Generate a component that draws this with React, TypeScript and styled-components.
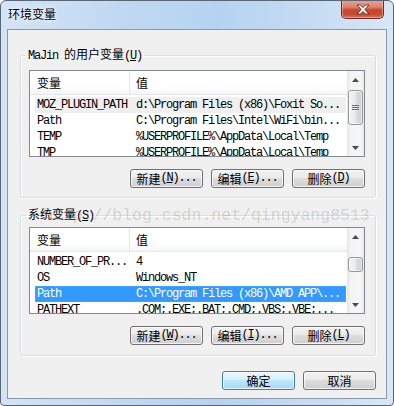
import React from "react";
import styled, { createGlobalStyle } from "styled-components";

const GlobalStyle = createGlobalStyle`
  html, body {
    margin: 0;
    padding: 0;
    background: #ffffff;
  }
  body {
    font-family: "Noto Sans CJK SC", "Liberation Sans", sans-serif;
    font-size: 12px;
    color: #000;
  }
  * {
    box-sizing: border-box;
  }
`;

const Window = styled.div`
  position: relative;
  width: 394px;
  height: 406px;
  display: flex;
  flex-direction: column;
  border: 1px solid #5b6573;
  border-radius: 6px 6px 4px 4px;
  background: linear-gradient(
    to right,
    #d3e4f5 0%,
    #c0d9f2 30%,
    #b5d3f1 55%,
    #c6dcf3 80%,
    #d8e7f7 100%
  );
  overflow: hidden;
`;

const TitleBar = styled.div`
  height: 28px;
  display: flex;
  justify-content: space-between;
  align-items: flex-start;
  padding-left: 7px;
`;

const Title = styled.div`
  margin-top: 5px;
  font-size: 12px;
  line-height: 16px;
  text-shadow: 0 0 6px rgba(255, 255, 255, 0.95), 0 0 2px #fff;
`;

const CloseButton = styled.div`
  width: 43px;
  height: 19px;
  margin-top: -1px;
  margin-right: 9px;
  border: 1px solid #6e2b22;
  border-top: none;
  border-radius: 0 0 5px 5px;
  background: linear-gradient(
    #e9a595 0%,
    #dc806d 40%,
    #c9462f 55%,
    #c24a33 80%,
    #d8775c 100%
  );
  box-shadow: inset 0 0 0 1px rgba(255, 210, 200, 0.45);
  display: flex;
  align-items: center;
  justify-content: center;
`;

const Client = styled.div`
  flex: 1;
  margin: 0 6px 6px;
  border: 1px solid #8e99a5;
  background: #f0f0f0;
  padding: 0 10px 0 12px;
  display: flex;
  flex-direction: column;
`;

const Group = styled.fieldset<{ $top: number; $pt: number; $pb: number }>`
  margin: ${(p) => p.$top}px 0 0;
  padding: ${(p) => p.$pt}px 10px ${(p) => p.$pb}px 8px;
  border: 1px solid #d5dfe5;
  border-radius: 3px;
  box-shadow: inset 1px 1px 0 #ffffff, 1px 1px 0 #ffffff;
  min-width: 0;
`;

const Legend = styled.legend`
  margin-left: -3px;
  padding: 0 2px;
  font-size: 12px;
  line-height: 14px;
`;

const Mono = styled.span`
  font-family: "Liberation Mono", "DejaVu Sans Mono", monospace;
  font-size: 12px;
  letter-spacing: -1.2px;
`;

const List = styled.div`
  height: 87px;
  border: 1px solid #828790;
  background: #ffffff;
  display: flex;
  overflow: hidden;
`;

const ListBody = styled.div`
  flex: 1;
  min-width: 0;
  display: flex;
  flex-direction: column;
`;

const Header = styled.div`
  height: 24px;
  flex-shrink: 0;
  display: grid;
  grid-template-columns: 100px 1fr;
  background: linear-gradient(#ffffff 0%, #ffffff 65%, #f4f5f7 100%);
  border-bottom: 1px solid #e3e6ea;
`;

const HeaderCell = styled.div<{ $first?: boolean }>`
  padding-left: ${(p) => (p.$first ? 7 : 6)}px;
  line-height: 23px;
  font-size: 12px;
  border-right: ${(p) => (p.$first ? "1px solid #e5e5e5" : "none")};
`;

const Rows = styled.div`
  padding: 2px 1px 0 5px;
`;

const Row = styled.div<{ $state?: "focus" | "selected" }>`
  height: 16px;
  display: grid;
  grid-template-columns: 99px 1fr;
  padding-left: 2px;
  line-height: 16px;
  white-space: nowrap;
  overflow: hidden;
  color: ${(p) => (p.$state === "selected" ? "#ffffff" : "#000000")};
  background: ${(p) =>
    p.$state === "selected"
      ? "#3399ff"
      : p.$state === "focus"
      ? "#efefef"
      : "transparent"};
  outline: ${(p) => (p.$state === "selected" ? "1px dotted #e0893a" : "none")};
  outline-offset: -1px;
`;

const Scrollbar = styled.div`
  width: 17px;
  flex-shrink: 0;
  display: flex;
  flex-direction: column;
  background: linear-gradient(
    to right,
    #e5e5e5 0%,
    #f4f4f4 20%,
    #f6f6f6 80%,
    #e9e9e9 100%
  );
`;

const Arrow = styled.div`
  height: 17px;
  flex-shrink: 0;
  display: flex;
  align-items: center;
  justify-content: center;
`;

const Track = styled.div`
  flex: 1;
  display: flex;
  flex-direction: column;
`;

const Thumb = styled.div<{ $offset: number; $size: number }>`
  margin: ${(p) => p.$offset}px 1px 0;
  height: ${(p) => p.$size}px;
  border: 1px solid #979797;
  border-radius: 3px;
  background: linear-gradient(
    to right,
    #f4f4f4 0%,
    #eaeaea 50%,
    #dcdcdc 51%,
    #d2d2d2 100%
  );
  box-shadow: inset 0 0 0 1px rgba(255, 255, 255, 0.6);
  display: flex;
  align-items: center;
  justify-content: center;
`;

const ButtonRow = styled.div<{ $top: number }>`
  margin-top: ${(p) => p.$top}px;
  display: flex;
  justify-content: flex-end;
  gap: 8px;
`;

const Button = styled.div<{ $default?: boolean }>`
  width: 73px;
  height: 19px;
  border: 1px solid ${(p) => (p.$default ? "#3c7fb1" : "#707070")};
  border-radius: 3px;
  background: ${(p) =>
    p.$default
      ? "linear-gradient(#eaf6fd 0%, #d9f0fc 45%, #bee6fd 50%, #a7d9f5 100%)"
      : "linear-gradient(#f2f2f2 0%, #ebebeb 45%, #dddddd 50%, #cfcfcf 100%)"};
  box-shadow: inset 0 0 0 1px rgba(255, 255, 255, 0.7);
  font-size: 12px;
  line-height: 17px;
  display: flex;
  align-items: center;
  justify-content: center;
  white-space: nowrap;
`;

const Watermark = styled.div`
  position: absolute;
  left: 42px;
  top: 205px;
  font-family: "Liberation Mono", monospace;
  font-size: 16.5px;
  line-height: 20px;
  color: rgba(110, 110, 110, 0.24);
  pointer-events: none;
  white-space: nowrap;
`;

type Var = { name: string; value: string; state?: "focus" | "selected" };

const userVars: Var[] = [
  { name: "MOZ_PLUGIN_PATH", value: "d:\\Program Files (x86)\\Foxit So...", state: "focus" },
  { name: "Path", value: "C:\\Program Files\\Intel\\WiFi\\bin..." },
  { name: "TEMP", value: "%USERPROFILE%\\AppData\\Local\\Temp" },
  { name: "TMP", value: "%USERPROFILE%\\AppData\\Local\\Temp" },
];

const systemVars: Var[] = [
  { name: "NUMBER_OF_PR...", value: "4" },
  { name: "OS", value: "Windows_NT" },
  { name: "Path", value: "C:\\Program Files (x86)\\AMD APP\\...", state: "selected" },
  { name: "PATHEXT", value: ".COM;.EXE;.BAT;.CMD;.VBS;.VBE;..." },
];

const Key = ({ k, tail = "" }: { k: string; tail?: string }) => (
  <Mono>
    (<u>{k}</u>){tail}
  </Mono>
);

const ArrowIcon = ({ down }: { down?: boolean }) => (
  <svg width="7" height="4" viewBox="0 0 7 4">
    <path
      d={down ? "M0 0 H7 L3.5 4 Z" : "M0 4 H7 L3.5 0 Z"}
      fill="#4a4a4a"
    />
  </svg>
);

const VarList = ({
  vars,
  thumbOffset,
  thumbSize,
  grip,
}: {
  vars: Var[];
  thumbOffset: number;
  thumbSize: number;
  grip?: boolean;
}) => (
  <List>
    <ListBody>
      <Header>
        <HeaderCell $first>变量</HeaderCell>
        <HeaderCell>值</HeaderCell>
      </Header>
      <Rows>
        {vars.map((v, i) => (
          <Row key={i} $state={v.state}>
            <Mono>{v.name}</Mono>
            <Mono>{v.value}</Mono>
          </Row>
        ))}
      </Rows>
    </ListBody>
    <Scrollbar>
      <Arrow>
        <ArrowIcon />
      </Arrow>
      <Track>
        <Thumb $offset={thumbOffset} $size={thumbSize}>
          {grip && (
            <svg width="7" height="6" viewBox="0 0 7 6">
              <path d="M0 0.5 H7 M0 2.5 H7 M0 4.5 H7" stroke="#6f6f6f" />
            </svg>
          )}
        </Thumb>
      </Track>
      <Arrow>
        <ArrowIcon down />
      </Arrow>
    </Scrollbar>
  </List>
);

const App = () => {
  return (
    <>
      <GlobalStyle />
      <Window>
        <TitleBar>
          <Title>环境变量</Title>
          <CloseButton>
            <svg width="14" height="11" viewBox="0 0 14 11">
              <path
                d="M1 1 H4.5 L7 3.6 L9.5 1 H13 L8.8 5.5 L13 10 H9.5 L7 7.4 L4.5 10 H1 L5.2 5.5 Z"
                fill="#ffffff"
                stroke="#5b2a22"
                strokeWidth="0.9"
                strokeLinejoin="round"
              />
            </svg>
          </CloseButton>
        </TitleBar>
        <Client>
          <Group $top={17} $pt={7} $pb={9}>
            <Legend>
              <Mono>MaJin </Mono>的用户变量<Key k="U" />
            </Legend>
            <VarList vars={userVars} thumbOffset={2} thumbSize={35} grip />
            <ButtonRow $top={12}>
              <Button>
                新建<Key k="N" tail="..." />
              </Button>
              <Button>
                编辑<Key k="E" tail="..." />
              </Button>
              <Button>
                删除<Key k="D" />
              </Button>
            </ButtonRow>
          </Group>
          <Group $top={9} $pt={4} $pb={10}>
            <Legend>
              系统变量<Key k="S" />
            </Legend>
            <VarList vars={systemVars} thumbOffset={12} thumbSize={15} />
            <ButtonRow $top={12}>
              <Button>
                新建<Key k="W" tail="..." />
              </Button>
              <Button>
                编辑<Key k="I" tail="..." />
              </Button>
              <Button>
                删除<Key k="L" />
              </Button>
            </ButtonRow>
          </Group>
          <ButtonRow $top={15}>
            <Button $default>确定</Button>
            <Button>取消</Button>
          </ButtonRow>
        </Client>
        <Watermark>http://blog.csdn.net/qingyang8513</Watermark>
      </Window>
    </>
  );
};

export default App;
